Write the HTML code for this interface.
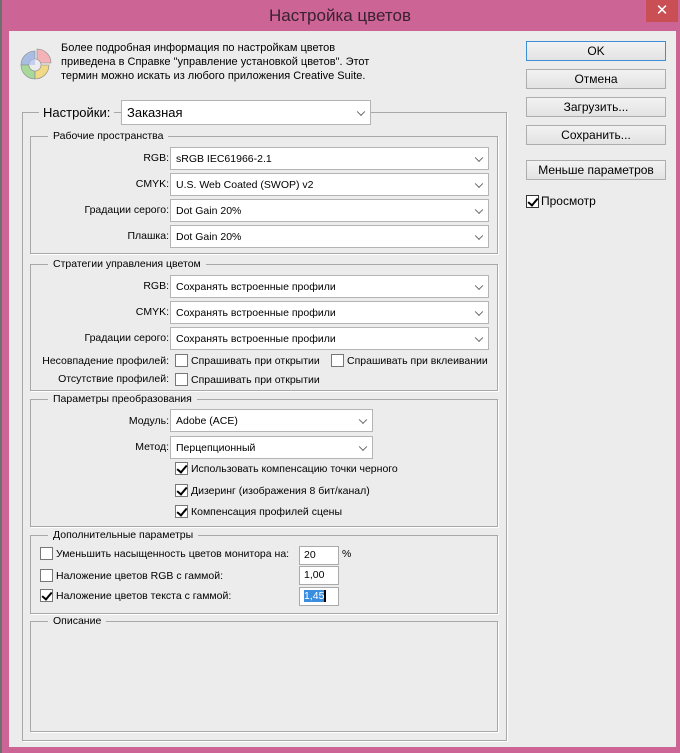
<!DOCTYPE html>
<html><head><meta charset="utf-8"><style>
*{box-sizing:border-box;margin:0;padding:0}
body{width:680px;height:753px;background:#cc6595;position:relative;overflow:hidden;font-family:"Liberation Sans","DejaVu Sans",sans-serif;font-size:10.5px;color:#000}
.lstrip{position:absolute;left:0;top:0;width:2px;height:753px;background:#6e6e6e}
.title{position:absolute;left:0;width:680px;top:6px;text-align:center;font-size:17px;color:#3a2030}
.close{position:absolute;left:646px;top:0;width:32px;height:22px;background:#c94f55;color:#fff;text-align:center;font-size:15px;line-height:22px}
.c{position:absolute;left:9px;top:31px;width:667px;height:716px;background:#ececec}
.a{position:absolute;white-space:nowrap}
.box{position:absolute;border:1px solid #a8a8a8;box-shadow:1px 1px 0 #fff}
.lg{position:absolute;background:#ececec;padding:0 5px;white-space:nowrap;top:-7px;left:17px;color:#000}
.sel{position:absolute;background:#fff;border:1px solid #b4b4b4;padding-left:5px;white-space:nowrap}
.sel:after{content:"";position:absolute;right:6px;top:50%;width:5px;height:5px;border-right:1.5px solid #666;border-bottom:1.5px solid #666;transform:translateY(-70%) rotate(45deg)}
.lab{position:absolute;text-align:right;white-space:nowrap}
.cb{position:absolute;width:13px;height:13px;background:#fff;border:1px solid #777}
.cb.on:after{content:"";position:absolute;left:3px;top:0px;width:4px;height:8px;border-right:2px solid #000;border-bottom:2px solid #000;transform:rotate(40deg)}
.btn{position:absolute;left:517px;width:140px;height:20px;border:1px solid #adadad;background:linear-gradient(#f2f2f2,#e3e3e3);text-align:center;line-height:18px;font-size:12px}
.inp{position:absolute;background:#fff;border:1px solid #aaa;padding-left:4px;height:19px;line-height:17px}
</style></head><body>
<div class="lstrip"></div>
<div class="title">Настройка цветов</div>
<div class="close">✕</div>
<div class="c">
<svg class="a" style="left:11px;top:17px" width="32" height="32" viewBox="0 0 32 32">
<path d="M15 17 L15 3 A14 14 0 0 0 1 17 Z" fill="#a9bde4" stroke="#888" stroke-width=".6"/>
<path d="M15 17 L1 17 A14 14 0 0 0 15 31 Z" fill="#a9d99a" stroke="#888" stroke-width=".6"/>
<path d="M15 17 L15 31 A14 14 0 0 0 29 17 Z" fill="#f1d986" stroke="#888" stroke-width=".6"/>
<path d="M17 15 L17 1 A14 14 0 0 1 31 15 Z" fill="#f4b3b8" stroke="#888" stroke-width=".6"/>
<circle cx="15" cy="17" r="6" fill="#ececec" stroke="#888" stroke-width=".6"/>
<path d="M15 17 L15 11 A6 6 0 0 0 9 17 Z" fill="#c4cff0"/>
</svg>
<div class="a" style="left:52px;top:10px;line-height:14px;font-size:11px">Более подробная информация по настройкам цветов<br>приведена в Справке "управление установкой цветов". Этот<br>термин можно искать из любого приложения Creative Suite.</div>

<div class="btn" style="top:10px;border-color:#3c8fd6">OK</div>
<div class="btn" style="top:38px">Отмена</div>
<div class="btn" style="top:66px">Загрузить...</div>
<div class="btn" style="top:94px">Сохранить...</div>
<div class="btn" style="top:129px">Меньше параметров</div>
<div class="cb on" style="left:517px;top:164px;border-color:#333"></div>
<div class="a" style="left:532px;top:163px;font-size:12px">Просмотр</div>

<div class="box" style="left:13px;top:81px;width:485px;height:629px"></div>
<div class="a" style="left:30px;top:70px;background:#ececec;padding:0 4px;font-size:13px;line-height:24px">Настройки:</div>
<div class="sel" style="left:112px;top:69px;width:250px;height:25px;line-height:23px;font-size:13px">Заказная</div>

<div class="box" style="left:21px;top:105px;width:468px;height:118px"><span class="lg">Рабочие пространства</span></div>
<div class="lab" style="right:507px;top:121px">RGB:</div>
<div class="sel" style="left:161px;top:116px;width:319px;height:23px;line-height:22px">sRGB IEC61966-2.1</div>
<div class="lab" style="right:507px;top:147px">CMYK:</div>
<div class="sel" style="left:161px;top:142px;width:319px;height:23px;line-height:22px">U.S. Web Coated (SWOP) v2</div>
<div class="lab" style="right:507px;top:173px">Градации серого:</div>
<div class="sel" style="left:161px;top:168px;width:319px;height:23px;line-height:22px">Dot Gain 20%</div>
<div class="lab" style="right:507px;top:199px">Плашка:</div>
<div class="sel" style="left:161px;top:194px;width:319px;height:23px;line-height:22px">Dot Gain 20%</div>

<div class="box" style="left:21px;top:233px;width:468px;height:127px"><span class="lg">Стратегии управления цветом</span></div>
<div class="lab" style="right:507px;top:249px">RGB:</div>
<div class="sel" style="left:161px;top:244px;width:319px;height:23px;line-height:22px">Сохранять встроенные профили</div>
<div class="lab" style="right:507px;top:275px">CMYK:</div>
<div class="sel" style="left:161px;top:270px;width:319px;height:23px;line-height:22px">Сохранять встроенные профили</div>
<div class="lab" style="right:507px;top:301px">Градации серого:</div>
<div class="sel" style="left:161px;top:296px;width:319px;height:23px;line-height:22px">Сохранять встроенные профили</div>
<div class="lab" style="right:507px;top:324px">Несовпадение профилей:</div>
<div class="cb" style="left:166px;top:323px"></div><div class="a" style="left:182px;top:324px">Спрашивать при открытии</div>
<div class="cb" style="left:322px;top:323px"></div><div class="a" style="left:338px;top:324px">Спрашивать при вклеивании</div>
<div class="lab" style="right:507px;top:342px">Отсутствие профилей:</div>
<div class="cb" style="left:166px;top:342px"></div><div class="a" style="left:182px;top:343px">Спрашивать при открытии</div>

<div class="box" style="left:21px;top:368px;width:468px;height:128px"><span class="lg">Параметры преобразования</span></div>
<div class="lab" style="right:507px;top:384px">Модуль:</div>
<div class="sel" style="left:161px;top:378px;width:203px;height:23px;line-height:22px">Adobe (ACE)</div>
<div class="lab" style="right:507px;top:410px">Метод:</div>
<div class="sel" style="left:161px;top:405px;width:203px;height:23px;line-height:22px">Перцепционный</div>
<div class="cb on" style="left:166px;top:431px"></div><div class="a" style="left:182px;top:432px">Использовать компенсацию точки черного</div>
<div class="cb on" style="left:166px;top:453px"></div><div class="a" style="left:182px;top:454px">Дизеринг (изображения 8 бит/канал)</div>
<div class="cb on" style="left:166px;top:474px"></div><div class="a" style="left:182px;top:475px">Компенсация профилей сцены</div>

<div class="box" style="left:21px;top:504px;width:468px;height:79px"><span class="lg">Дополнительные параметры</span></div>
<div class="cb" style="left:31px;top:516px"></div><div class="a" style="left:47px;top:517px">Уменьшить насыщенность цветов монитора на:</div>
<div class="inp" style="left:290px;top:515px;width:40px">20</div><div class="a" style="left:333px;top:517px">%</div>
<div class="cb" style="left:31px;top:538px"></div><div class="a" style="left:47px;top:539px">Наложение цветов RGB с гаммой:</div>
<div class="inp" style="left:290px;top:535px;width:40px">1,00</div>
<div class="cb on" style="left:31px;top:558px"></div><div class="a" style="left:47px;top:559px">Наложение цветов текста с гаммой:</div>
<div class="inp" style="left:290px;top:556px;width:40px"><span style="background:#3b8de0;color:#fff">1,45</span><span style="border-left:2px solid #000;margin-left:0"></span></div>

<div class="box" style="left:21px;top:590px;width:468px;height:111px"><span class="lg">Описание</span></div>
</div>
</body></html>
